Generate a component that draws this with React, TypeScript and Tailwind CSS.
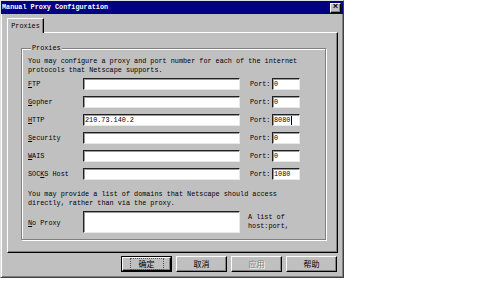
const mono = "font-['Liberation_Mono','DejaVu_Sans_Mono',monospace]";
const cjk = "font-['Noto_Sans_CJK_SC',sans-serif]";

const raised =
  "border border-t-white border-l-white border-b-black border-r-black shadow-[inset_-1px_-1px_0_#808080]";
const sunken =
  "bg-white border border-t-[#202020] border-l-[#202020] border-b-[#e8e8e8] border-r-[#e8e8e8] shadow-[inset_1px_1px_0_#9a9a9a]";

interface Row {
  label: string;
  key: number; // index of underlined letter
  host: string;
  port: string;
  caret?: boolean;
}

const rows: Row[] = [
  { label: "FTP", key: 0, host: "", port: "0" },
  { label: "Gopher", key: 0, host: "", port: "0" },
  { label: "HTTP", key: 0, host: "210.73.140.2", port: "8080", caret: true },
  { label: "Security", key: 0, host: "", port: "0" },
  { label: "WAIS", key: 0, host: "", port: "0" },
  { label: "SOCKS Host", key: 3, host: "", port: "1080" },
];

function Accel({ text, at }: { text: string; at: number }) {
  return (
    <span>
      {text.slice(0, at)}
      <span className="underline underline-offset-[1px]">{text[at]}</span>
      {text.slice(at + 1)}
    </span>
  );
}

function ProxyRow({ row }: { row: Row }) {
  return (
    <div className="flex h-[12px] items-center">
      <div className="w-[55px]">
        <Accel text={row.label} at={row.key} />
      </div>
      <div className={`${sunken} h-[12px] w-[157px] pl-[1px] leading-[10px]`}>{row.host}</div>
      <div className="ml-[10px] w-[22px]">Port:</div>
      <div className={`${sunken} flex h-[12px] w-[28px] items-center pl-[1px] leading-[10px]`}>
        {row.port}
        {row.caret && <span className="ml-[1px] inline-block h-[9px] w-px bg-black" />}
      </div>
    </div>
  );
}

function DlgButton({ label, isDefault, disabled }: { label: string; isDefault?: boolean; disabled?: boolean }) {
  return (
    <div className={isDefault ? "border border-black" : ""}>
      <div
        className={`${raised} ${cjk} flex items-center justify-center text-[8px] leading-none ${
          isDefault ? "h-[14px] w-[49px]" : "h-[16px] w-[51px]"
        } ${disabled ? "text-[#808080] [text-shadow:1px_1px_0_#fff]" : "text-black"}`}
      >
        {isDefault ? (
          <span className="border border-dotted border-[#555] px-[8px] py-[1px]">{label}</span>
        ) : (
          label
        )}
      </div>
    </div>
  );
}

export default function App() {
  return (
    <div className={`h-[304px] w-[500px] bg-white text-[6.8px] leading-[9px] text-black ${mono}`}>
      <div className="flex h-[278px] w-[344px] flex-col border border-t-[#dfdfdf] border-l-[#dfdfdf] border-b-[#404040] border-r-[#404040] bg-[#c0c0c0] shadow-[inset_1px_1px_0_#fff,inset_-1px_-1px_0_#808080]">
        {/* title bar */}
        <div className="flex h-[13px] items-center justify-between bg-[#000080] pl-[1px] pr-[2px]">
          <span className="font-bold text-white">Manual Proxy Configuration</span>
          <div className={`${raised} flex h-[10px] w-[11px] items-center justify-center bg-[#c0c0c0] text-[9px] font-bold leading-none`}>
            ×
          </div>
        </div>

        {/* tabs */}
        <div className="flex flex-col px-[6px] pt-[4px]">
          <div className="relative z-10 -mb-px flex h-[15px] w-[37px] items-center justify-center border border-b-0 border-t-white border-l-white border-r-black bg-[#c0c0c0] shadow-[inset_-1px_0_0_#808080]">
            Proxies
          </div>
          <div className="flex h-[221px] w-[331px] flex-col border border-t-white border-l-white border-b-black border-r-black px-[13px] pt-[11px] shadow-[inset_-1px_-1px_0_#808080]">
            <fieldset className="w-[305px] border border-[#808080] pb-[6px] pl-[6px] shadow-[1px_1px_0_#fff,inset_1px_1px_0_#fff]">
              <legend className="ml-[3px] bg-[#c0c0c0] px-[1px]">Proxies</legend>
              <div className="pt-[4px]">
                <p>You may configure a proxy and port number for each of the internet</p>
                <p>protocols that Netscape supports.</p>
              </div>
              <div className="mt-[3px] flex flex-col gap-[6px]">
                {rows.map((r) => (
                  <ProxyRow key={r.label} row={r} />
                ))}
              </div>
              <div className="mt-[10px]">
                <p>You may provide a list of domains that Netscape should access</p>
                <p>directly, rather than via the proxy.</p>
              </div>
              <div className="mt-[3px] flex h-[22px] items-center">
                <div className="w-[55px] pt-[3px]">
                  <Accel text="No Proxy" at={0} />
                </div>
                <div className={`${sunken} h-[22px] w-[157px]`} />
                <div className="ml-[8px] flex flex-col">
                  <span>A list of</span>
                  <span>host:port,</span>
                </div>
              </div>
            </fieldset>
          </div>
        </div>

        {/* buttons */}
        <div className="mt-[3px] flex justify-end gap-[4px] pr-[6px]">
          <DlgButton label="确定" isDefault />
          <DlgButton label="取消" />
          <DlgButton label="应用" disabled />
          <DlgButton label="帮助" />
        </div>
      </div>
    </div>
  );
}
